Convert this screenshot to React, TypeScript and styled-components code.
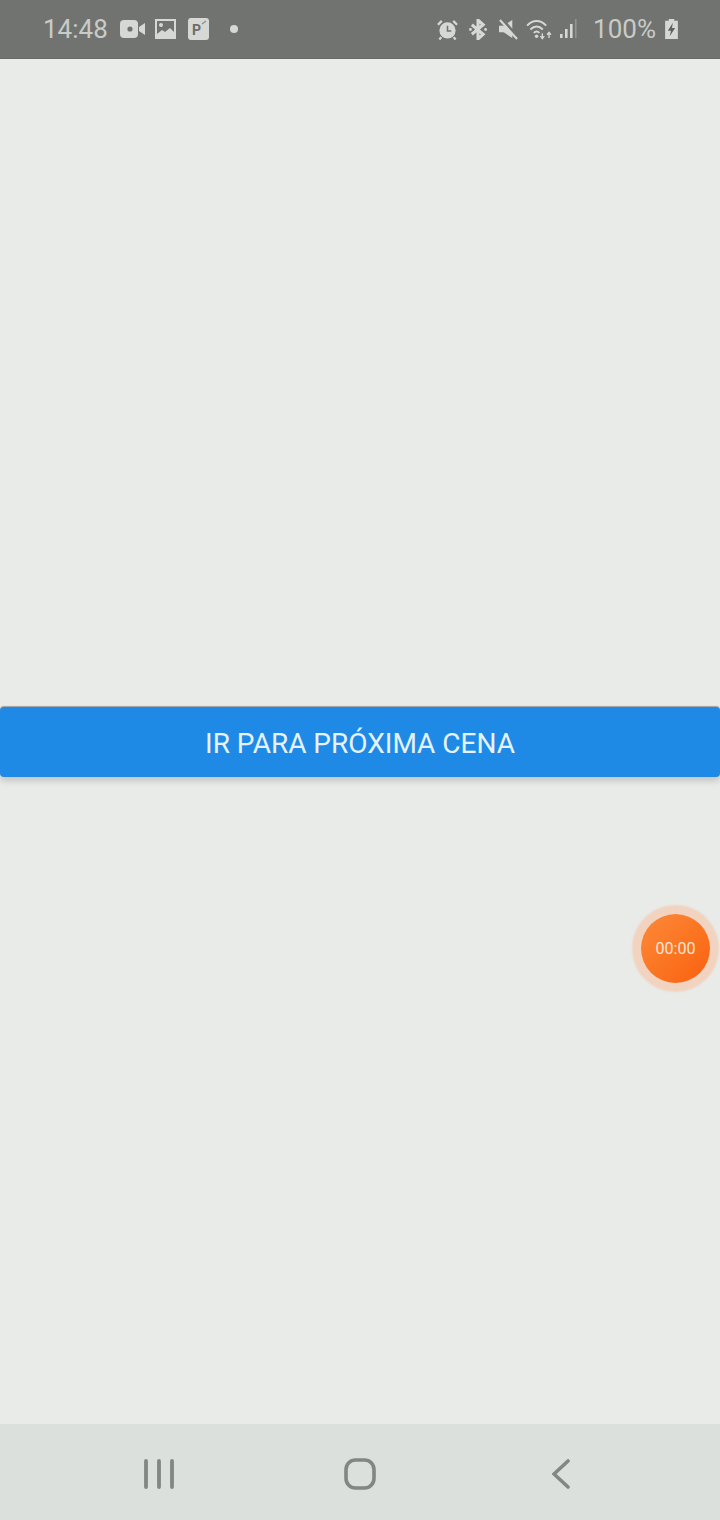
import React from "react";
import styled, { createGlobalStyle } from "styled-components";

const Global = createGlobalStyle`
  html, body { margin: 0; padding: 0; }
  body { font-family: Roboto, "Liberation Sans", sans-serif; background: #e9ebe9; }
`;

const Screen = styled.div`
  position: relative;
  width: 720px;
  height: 1520px;
  display: flex;
  flex-direction: column;
  overflow: hidden;
  background: #e9ebe9;
`;

const StatusBar = styled.header`
  flex: none;
  height: 59px;
  box-sizing: border-box;
  padding: 0 42px 0 43px;
  display: flex;
  align-items: center;
  justify-content: space-between;
  background: #717370;
  border-bottom: 1px solid #686a67;
  color: #c9cbc8;
`;

const StatusGroup = styled.div`
  display: flex;
  align-items: center;
`;

const StatusText = styled.span<{ $left?: number }>`
  font-size: 26px;
  line-height: 59px;
  margin-left: ${(p) => p.$left ?? 0}px;
  white-space: nowrap;
`;

const Icon = styled.svg<{ $left?: number }>`
  display: block;
  flex: none;
  margin-left: ${(p) => p.$left ?? 0}px;
`;

const Content = styled.main`
  flex: 1;
  display: flex;
  flex-direction: column;
  justify-content: center;
`;

const NextButton = styled.button`
  display: block;
  width: 100%;
  height: 70px;
  box-sizing: border-box;
  margin: 1px 0 0;
  padding: 4px 0 0;
  border: 0;
  border-radius: 4px;
  background: #1f8ae5;
  color: #e6f2fb;
  font-family: Roboto, "Liberation Sans", sans-serif;
  font-size: 28px;
  line-height: 66px;
  text-align: center;
  box-shadow: 0 -1px 1px rgba(0, 0, 0, 0.3), 0 4px 6px rgba(0, 0, 0, 0.16);
`;

const Timer = styled.div`
  position: absolute;
  left: 641px;
  top: 914px;
  width: 69px;
  height: 69px;
  border-radius: 50%;
  display: flex;
  align-items: center;
  justify-content: center;
  background: linear-gradient(135deg, #fb8a3c 0%, #fb7420 55%, #f95f12 100%);
  box-shadow: 0 0 2px 9px #f1d3c0;
  color: #fde6d6;
  font-size: 16px;
`;

const NavBar = styled.nav`
  flex: none;
  height: 96px;
  box-sizing: border-box;
  padding: 0 58.5px;
  display: grid;
  grid-template-columns: repeat(3, 1fr);
  background: #dce0dd;
  color: #838684;
`;

const NavSlot = styled.div`
  display: flex;
  align-items: center;
  justify-content: center;
  padding-top: 4px;
`;

const Camera = () => (
  <Icon width="25" height="18" viewBox="0 0 25 18" $left={12}>
    <rect x="0" y="0" width="18" height="18" rx="4" fill="#d6d8d5" />
    <circle cx="10" cy="9" r="2.600" fill="#717370" />
    <path d="M19 7l6-4v12l-6-4z" fill="#d6d8d5" />
  </Icon>
);

const Picture = () => (
  <Icon width="21" height="20" viewBox="0 0 21 20" $left={10}>
    <rect x="1" y="1" width="19" height="18" fill="none" stroke="#d6d8d5" strokeWidth="2" />
    <circle cx="6" cy="6" r="2" fill="#d6d8d5" />
    <path d="M2 15l5-4 3 2 5-4 4 4v5H2z" fill="#d6d8d5" />
  </Icon>
);

const ParkingBadge = () => (
  <Icon width="21" height="22" viewBox="0 0 21 22" $left={12}>
    <rect width="21" height="22" rx="3" fill="#d6d8d5" />
    <text x="4" y="17" fontFamily="Roboto, sans-serif" fontWeight="700" fontSize="14" fill="#6b6d6a">P</text>
    <path d="M14 6l4-3" stroke="#8d8f8c" strokeWidth="1.400" />
  </Icon>
);

const Dot = () => (
  <Icon width="8" height="8" viewBox="0 0 8 8" $left={21}>
    <circle cx="4" cy="4" r="4" fill="#d6d8d5" />
  </Icon>
);

const Alarm = () => (
  <Icon width="21" height="21" viewBox="0 0 22 22">
    <circle cx="11" cy="12" r="8.500" fill="#d6d8d5" />
    <path d="M11 7v5.500h4" fill="none" stroke="#717370" strokeWidth="1.600" />
    <path d="M1 6l4-4M21 6l-4-4M4.500 19l-2 2.500M17.500 19l2 2.500" stroke="#d6d8d5" strokeWidth="2.400" />
  </Icon>
);

const Bluetooth = () => (
  <Icon width="18" height="21" viewBox="0 0 19 22" $left={11}>
    <path d="M3 6l12 10-5.500 5V1L15 6 3 16" fill="none" stroke="#d6d8d5" strokeWidth="3.200" />
    <circle cx="1.500" cy="11" r="1.500" fill="#d6d8d5" />
    <circle cx="17.500" cy="11" r="1.500" fill="#d6d8d5" />
  </Icon>
);

const Muted = () => (
  <Icon width="19" height="21" viewBox="0 0 20 22" $left={12}>
    <path d="M0 7h5l9-6v19l-9-6H0z" fill="#d6d8d5" />
    <path d="M4 1l16 18" stroke="#717370" strokeWidth="3" />
    <path d="M1 1l18 20" stroke="#d6d8d5" strokeWidth="2.200" />
  </Icon>
);

const Wifi = () => (
  <Icon width="26" height="21" viewBox="0 0 27 22" $left={8}>
    <g fill="none" stroke="#d6d8d5" strokeWidth="2">
      <path d="M1 7c6-6.500 14-6.500 20 0" />
      <path d="M4.500 11c4-4.200 9-4.200 13 0" />
      <path d="M8 14.500c2-2 4-2 6 0" />
    </g>
    <circle cx="11" cy="18" r="1.800" fill="#d6d8d5" />
    <path d="M17 15v5m-2-2l2 2.500 2-2.500M24 20v-6m-2 2.500l2-2.500 2 2.500" fill="none" stroke="#d6d8d5" strokeWidth="1.400" />
  </Icon>
);

const Signal = () => (
  <Icon width="18" height="20" viewBox="0 0 18 20" $left={7}>
    <rect x="1" y="15" width="2.600" height="4" fill="#d6d8d5" />
    <rect x="6" y="10" width="2.600" height="9" fill="#d6d8d5" />
    <rect x="11" y="5" width="2.600" height="14" fill="#d6d8d5" />
    <rect x="16" y="0" width="1.600" height="19" fill="#92948f" />
  </Icon>
);

const Battery = () => (
  <Icon width="13" height="20" viewBox="0 0 14 22" $left={9}>
    <path d="M4 0h6v2h4v20H0V2h4z" fill="#d6d8d5" />
    <path d="M8.500 4L3 13h3.500L5 19l6-9H7.500z" fill="#5f615e" />
  </Icon>
);

export default function App() {
  return (
    <Screen>
      <Global />
      <StatusBar>
        <StatusGroup>
          <StatusText>14:48</StatusText>
          <Camera />
          <Picture />
          <ParkingBadge />
          <Dot />
        </StatusGroup>
        <StatusGroup>
          <Alarm />
          <Bluetooth />
          <Muted />
          <Wifi />
          <Signal />
          <StatusText $left={16}>100%</StatusText>
          <Battery />
        </StatusGroup>
      </StatusBar>
      <Content>
        <NextButton>IR PARA PRÓXIMA CENA</NextButton>
      </Content>
      <Timer>00:00</Timer>
      <NavBar>
        <NavSlot>
          <svg width="30" height="30" viewBox="0 0 30 30">
            <path d="M2 2v26M15 2v26M28 2v26" stroke="currentColor" strokeWidth="3.800" strokeLinecap="round" />
          </svg>
        </NavSlot>
        <NavSlot>
          <svg width="32" height="32" viewBox="0 0 32 32">
            <rect x="2" y="2" width="28" height="28" rx="9.500" fill="none" stroke="currentColor" strokeWidth="3.600" />
          </svg>
        </NavSlot>
        <NavSlot>
          <svg width="18" height="30" viewBox="0 0 18 30">
            <path d="M16 2L2 15l14 13" fill="none" stroke="currentColor" strokeWidth="3.600" strokeLinecap="round" />
          </svg>
        </NavSlot>
      </NavBar>
    </Screen>
  );
}
